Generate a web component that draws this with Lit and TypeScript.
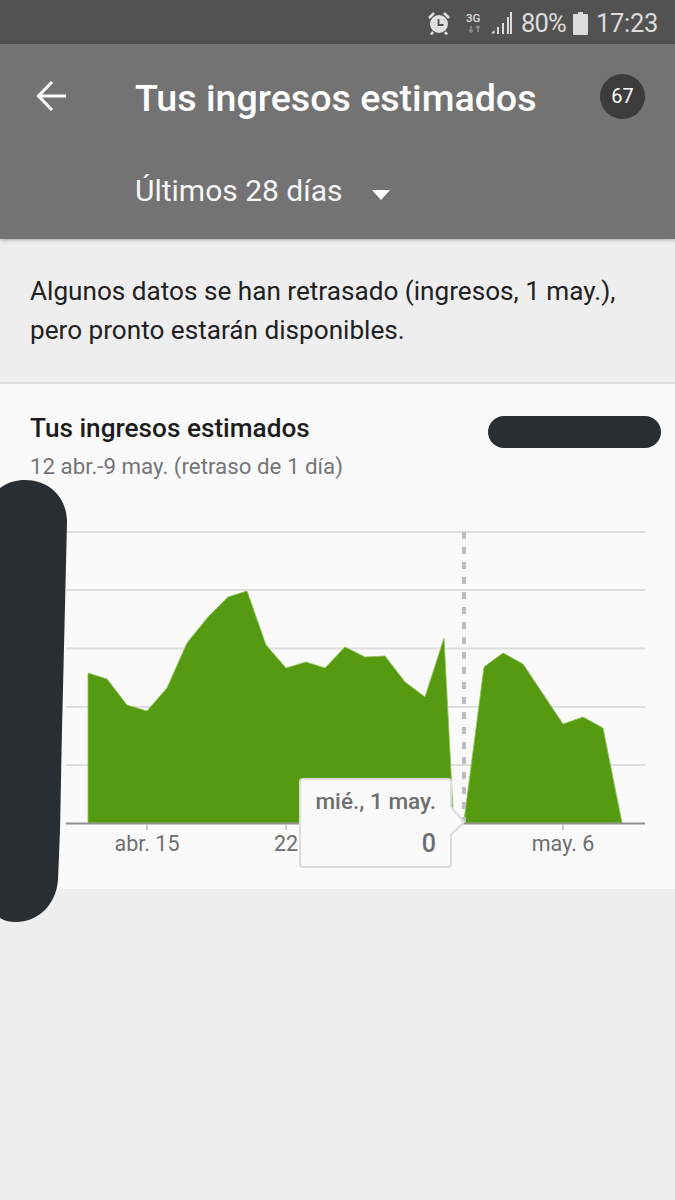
import { LitElement, css, html, svg } from 'lit'
import { customElement } from 'lit/decorators.js'

const AREA = [
  [88, 823], [88, 673], [107, 679], [127, 705], [147, 711], [167, 688], [187, 643], [208, 617],
  [228, 597], [247, 591], [266, 645], [286, 668], [306, 662], [325, 668], [345, 647], [365, 657],
  [385, 656], [405, 682], [425, 697], [444, 638], [453, 810], [464, 821], [484, 667], [503, 653],
  [523, 664], [543, 694], [563, 724], [583, 717], [603, 728], [622, 823],
]
const GRID = [532, 590, 648.5, 707, 765]
const TICKS = [
  { x: 147, label: 'abr. 15' },
  { x: 286, label: '22' },
  { x: 563, label: 'may. 6' },
]

@customElement('app-root')
export class AppRoot extends LitElement {
  static styles = css`
    :host {
      display: block;
      width: 675px;
      height: 1200px;
      position: relative;
      overflow: hidden;
      background: #eeeeee;
      font-family: Roboto, 'Liberation Sans', sans-serif;
    }
    .status {
      height: 44px;
      background: #525252;
      color: #dcdcdc;
      display: flex;
      align-items: center;
      justify-content: flex-end;
      padding: 2px 17px 0 0;
      font-size: 25.5px;
      box-sizing: border-box;
    }
    .status svg { display: block; }
    .alarm { margin-right: 15px; }
    .net { margin-right: 7px; }
    .signal { margin-right: 9px; }
    .batt { margin: 0 8px 0 7px; }
    .time { letter-spacing: -0.3px; }
    .pct { letter-spacing: -0.8px; }
    header {
      height: 195px;
      background: #737373;
      box-shadow: 0 1px 4px rgba(0, 0, 0, 0.3);
      color: #fff;
      position: relative;
      box-sizing: border-box;
      padding-top: 28px;
    }
    .top {
      display: flex;
      align-items: center;
      height: 48px;
      padding: 0 30px 0 36px;
    }
    .top svg { display: block; margin-right: 69px; }
    h1 {
      flex: 1;
      margin: 0;
      padding-top: 4px;
      font-size: 37.6px;
      font-weight: 500;
      line-height: 48px;
    }
    .badge {
      width: 45px;
      height: 45px;
      border-radius: 50%;
      background: #3c3c3c;
      display: flex;
      align-items: center;
      justify-content: center;
      font-size: 20px;
    }
    .range {
      display: flex;
      align-items: center;
      margin: 53px 0 0 135px;
      font-size: 30px;
      line-height: 36px;
      color: #f6f6f6;
    }
    .caret {
      width: 0;
      height: 0;
      margin: 8px 0 0 29px;
      border: 9px solid transparent;
      border-top: 10px solid #fff;
      border-bottom: 0;
    }
    .notice {
      height: 145px;
      box-sizing: border-box;
      padding: 33px 30px 0;
      margin: 0;
      font-size: 26.15px;
      line-height: 39px;
      color: #212121;
      border-bottom: 2px solid #dcdcdc;
    }
    .card {
      height: 505px;
      background: #fafafa;
      box-sizing: border-box;
      padding: 27px 30px 0;
    }
    .card h2 {
      margin: 0;
      font-size: 26.2px;
      font-weight: 500;
      line-height: 34px;
      color: #1c1c1c;
    }
    .card p {
      margin: 6px 0 0;
      font-size: 22.3px;
      line-height: 30px;
      color: #757575;
    }
    .plot {
      position: absolute;
      left: 0;
      top: 0;
      pointer-events: none;
    }
    .tip {
      position: absolute;
      left: 299px;
      top: 778px;
      width: 153px;
      height: 90px;
      box-sizing: border-box;
      background: #fafafa;
      border: 2px solid #dcdedb;
      border-radius: 4px;
      padding: 9px 14px 0 0;
      text-align: right;
      color: #6e6e6e;
      font-weight: 500;
    }
    .tip .date { font-size: 22.6px; line-height: 26px; white-space: nowrap; }
    .tip .val { font-size: 25px; line-height: 30px; margin-top: 14px; }
    .tip-arrow {
      position: absolute;
      left: 449px;
      top: 806px;
    }
    .mask { position: absolute; display: block; }
    .mask-top {
      left: 488px;
      top: 416px;
      width: 173px;
      height: 32px;
      border-radius: 16px;
      background: #292e33;
    }
    .mask-side {
      left: 0;
      top: 470px;
    }
  `

  render() {
    const pts = AREA.map(p => p.join(',')).join(' ')
    return html`
      <div class="status">
        <svg class="alarm" width="24" height="24" viewBox="0 0 24 24">
          <circle cx="12" cy="13" r="9" fill="#e0e0e0" />
          <path d="M2 7l5-5M22 7l-5-5M6 21l-2 2.5M18 21l2 2.5" stroke="#e0e0e0" stroke-width="2.6" fill="none" />
          <path d="M11.5 8v6h5" stroke="#4f4f4f" stroke-width="1.8" fill="none" />
        </svg>
        <svg class="net" width="18" height="24" viewBox="0 0 18 24">
          <text x="0" y="11" font-size="11.5" font-weight="500" fill="#dcdcdc" font-family="Roboto">3G</text>
          <path d="M5 15v6M3 19l2 2 2-2M12 21v-6M10 17l2-2 2 2" stroke="#8c8c8c" stroke-width="1.6" fill="none" />
        </svg>
        <svg class="signal" width="21" height="24" viewBox="0 0 21 24">
          <path d="M0 22.5h3.5v-3.5z" fill="#dcdcdc" />
          <path d="M7 23v-7M12 23v-11M17 23v-17M20 23V1" stroke="#dcdcdc" stroke-width="2" fill="none" />
        </svg>
        <span class="pct">80%</span>
        <svg class="batt" width="15" height="24" viewBox="0 0 15 24">
          <path d="M5 1h5v2h4a1 1 0 0 1 1 1v19a1 1 0 0 1-1 1H1a1 1 0 0 1-1-1V4a1 1 0 0 1 1-1h4z" fill="#dcdcdc" />
        </svg>
        <span class="time">17:23</span>
      </div>
      <header>
        <div class="top">
          <svg width="30" height="32" viewBox="0 0 30 32">
            <path d="M30 16H3M16 2L2.500 16l13.500 14" stroke="#fff" stroke-width="3" fill="none" />
          </svg>
          <h1>Tus ingresos estimados</h1>
          <div class="badge">67</div>
        </div>
        <div class="range">Últimos 28 días<span class="caret"></span></div>
      </header>
      <p class="notice">Algunos datos se han retrasado (ingresos, 1 may.),<br />pero pronto estarán disponibles.</p>
      <section class="card">
        <h2>Tus ingresos estimados</h2>
        <p>12 abr.-9 may. (retraso de 1 día)</p>
      </section>
      <svg class="plot" width="675" height="900" viewBox="0 0 675 900">
        ${GRID.map(y => svg`<line x1="66" x2="645" y1=${y} y2=${y} stroke="#dedede" stroke-width="2" />`)}
        <polygon points=${pts} fill="#559a10" stroke="#8cc04f" stroke-width="0.8" />
        <line x1="464" x2="464" y1="532" y2="822" stroke="#bdbdc0" stroke-width="4" stroke-dasharray="7 8" />
        <line x1="66" x2="645" y1="823.5" y2="823.5" stroke="#8f8f8f" stroke-width="2" />
        ${TICKS.map(t => svg`
          <line x1=${t.x} x2=${t.x} y1="825" y2="830" stroke="#9e9e9e" stroke-width="1" />
          <text x=${t.x} y="851" text-anchor="middle" font-size="21.5" fill="#6e6e6e" font-family="Roboto">${t.label}</text>
        `)}
      </svg>
      <div class="tip">
        <div class="date">mié., 1 may.</div>
        <div class="val">0</div>
      </div>
      <svg class="tip-arrow" width="18" height="32" viewBox="0 0 18 32">
        <path d="M0 0L15 16L0 31z" fill="#fafafa" />
        <path d="M2 1L15 16L1 30" stroke="#dcdedb" stroke-width="2" fill="none" />
      </svg>
      <div class="mask mask-top"></div>
      <svg class="mask mask-side" width="70" height="455" viewBox="0 0 70 455">
        <path d="M0 18C8 12 17 10 25 10C50 10 67 28 67 52L62 260L60 360L58 410C56 435 38 452 16 452C10 452 5 451 0 448z" fill="#292e33" />
      </svg>
    `
  }
}
